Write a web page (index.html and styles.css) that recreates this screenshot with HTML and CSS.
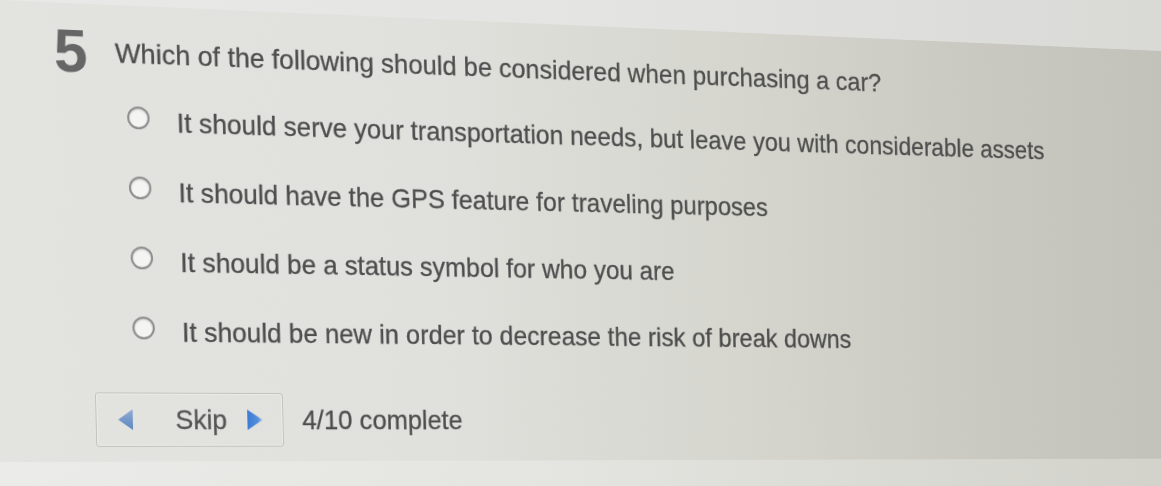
FILE: index.html
```html
<!DOCTYPE html>
<html lang="en">
<head>
<meta charset="utf-8">
<title>Quiz question 5</title>
<link rel="stylesheet" href="styles.css">
</head>
<body>
<div class="screen">
  <div class="panel">
    <div class="question">
      <span class="qnum">5</span>
      <p class="qtext">Which of the following should be considered when purchasing a car?</p>
    </div>
    <ul class="options">
      <li class="option"><span class="radio"></span><span class="label">It should serve your transportation needs, but leave you with considerable assets</span></li>
      <li class="option"><span class="radio"></span><span class="label">It should have the GPS feature for traveling purposes</span></li>
      <li class="option"><span class="radio"></span><span class="label">It should be a status symbol for who you are</span></li>
      <li class="option"><span class="radio"></span><span class="label">It should be new in order to decrease the risk of break downs</span></li>
    </ul>
    <div class="nav">
      <div class="skip">
        <svg class="tri tri-left" width="15" height="21" viewBox="0 0 15 21">
          <defs>
            <linearGradient id="gl" x1="0" y1="0" x2="0" y2="1">
              <stop offset="0" stop-color="#8eaad2"/>
              <stop offset="1" stop-color="#5f87c0"/>
            </linearGradient>
          </defs>
          <polygon points="15,0 15,21 0,10.5" fill="url(#gl)"/>
        </svg>
        <span class="skip-label">Skip</span>
        <svg class="tri tri-right" width="16" height="21" viewBox="0 0 16 21">
          <defs>
            <linearGradient id="gr" x1="0" y1="0" x2="1" y2="0">
              <stop offset="0" stop-color="#3a7bd4"/>
              <stop offset="0.7" stop-color="#5690dc"/>
              <stop offset="1" stop-color="#a3c2ea"/>
            </linearGradient>
          </defs>
          <polygon points="0,0 16,10.5 0,21" fill="url(#gr)"/>
        </svg>
      </div>
      <span class="progress">4/10 complete</span>
    </div>
  </div>
  <div class="strip"></div>
</div>
</body>
</html>
```

FILE: styles.css
```css
html, body {
  margin: 0;
  padding: 0;
  height: 100%;
  overflow: hidden;
}

body {
  background: linear-gradient(to right, #e9e9e7 0%, #e4e4e2 50%, #d9d9d6 100%);
  font-family: "Liberation Sans", Arial, Helvetica, sans-serif;
}

.screen {
  width: 1336px;
  margin-left: -14px;
  transform-origin: 14px 0;
  transform: matrix3d(1, 0.04396, 0, 0.0001015, 0.025, 1, 0, 0, 0, 0, 1, 0, 0, 0, 0, 1);
  filter: blur(0.45px);
}

.panel {
  box-sizing: border-box;
  height: 462px;
  padding: 18px 0 0 67px;
  background: linear-gradient(to right, #e3e3e0 0%, #e0e0dc 35%, #d5d5ce 62%, #c9c9c1 82%, #c2c2ba 100%);
}

.strip {
  height: 40px;
  background: linear-gradient(to right, #ebebe9 0%, #e4e4e0 45%, #d8d8d2 80%, #d2d2cb 100%);
}

.question {
  display: flex;
  align-items: flex-start;
}

.qnum {
  font-weight: bold;
  font-size: 61px;
  line-height: 60px;
  color: #666;
}

.qtext {
  margin: 15px 0 0 28px;
  font-size: 28px;
  line-height: 32px;
  color: #4e4e4e;
  -webkit-text-stroke: 0.3px #4e4e4e;
  white-space: nowrap;
}

.options {
  list-style: none;
  margin: 24px 0 0 72.6px;
  padding: 0;
  display: flex;
  flex-direction: column;
  gap: 39px;
}

.option {
  display: flex;
  align-items: flex-start;
  height: 32px;
}

.radio {
  flex: none;
  box-sizing: border-box;
  width: 23px;
  height: 23px;
  border-radius: 50%;
  border: 2px solid #8c8c8c;
  background: #f4f4f2;
  box-shadow: inset 0 1px 2px rgba(0, 0, 0, 0.2);
}

.label {
  margin-left: 28.5px;
  font-size: 27.6px;
  line-height: 32px;
  color: #4e4e4e;
  -webkit-text-stroke: 0.3px #4e4e4e;
  white-space: nowrap;
}

.nav {
  display: flex;
  align-items: center;
  margin: 45px 0 0 33px;
}

.skip {
  box-sizing: border-box;
  width: 195px;
  height: 55px;
  border: 1px solid #c1c1bd;
  border-radius: 3px;
  box-shadow: inset 0 0 0 1px rgba(255, 255, 255, 0.35);
  display: flex;
  align-items: center;
  padding-left: 22px;
}

.tri {
  flex: none;
  display: block;
}

.skip-label {
  margin-left: 44px;
  font-size: 27.6px;
  line-height: 32px;
  color: #555;
  -webkit-text-stroke: 0.3px #555;
}

.tri-right {
  margin-left: 21px;
}

.progress {
  margin-left: 20px;
  font-size: 27.6px;
  line-height: 32px;
  color: #4e4e4e;
  -webkit-text-stroke: 0.3px #4e4e4e;
  white-space: nowrap;
}
```
